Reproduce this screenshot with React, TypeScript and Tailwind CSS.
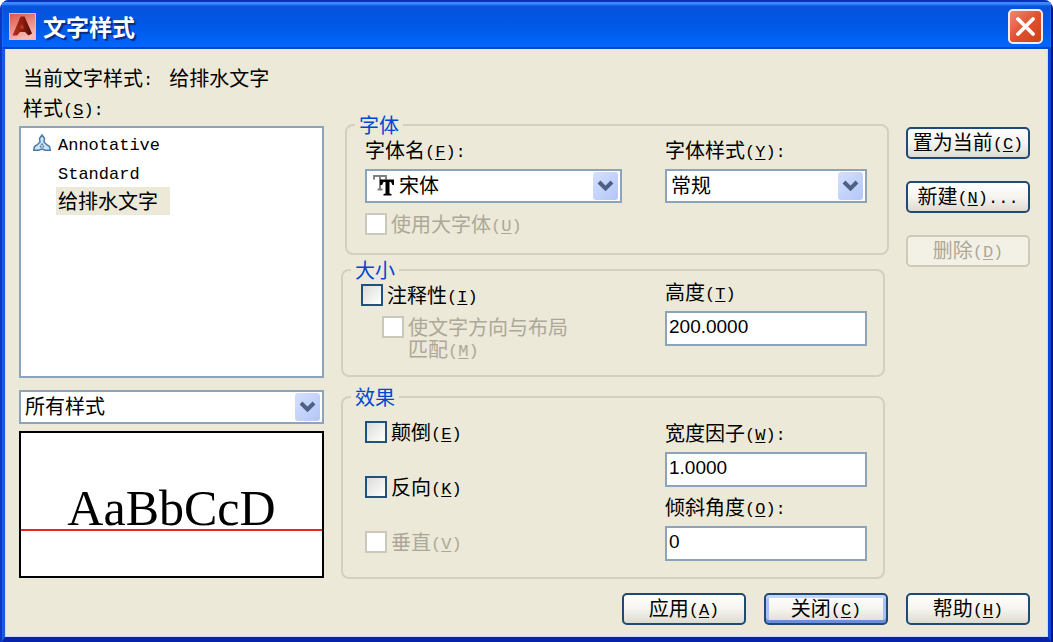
import { useState } from "react";
import type { ReactNode } from "react";
import clsx from "clsx";

const STYLES = ["Annotative", "Standard", "给排水文字"];

const Mono = ({ children }: { children: ReactNode }) => (
  <span className="align-middle font-['Liberation_Mono','Noto_Sans_CJK_SC',monospace] text-[17px] leading-[14px]">
    {children}
  </span>
);

// Label text followed by its keyboard mnemonic, e.g. 高度(T)
const Caption = ({ text, hotkey, after = "" }: { text: string; hotkey: string; after?: string }) => (
  <span>
    {text}
    <Mono>
      (<u className="underline-offset-2">{hotkey}</u>){after}
    </Mono>
  </span>
);

const Chevron = () => (
  <span className="pointer-events-none absolute inset-y-px right-0.5 flex w-[25px] items-center justify-center rounded-[3px] bg-linear-to-br from-[#d5e0fe] to-[#b3c6f8]">
    <svg width="17" height="12" viewBox="0 0 17 12" fill="none" aria-hidden="true">
      <path d="m2 2 6.5 6.5L15 2" stroke="#4d6185" strokeWidth="4" />
    </svg>
  </span>
);

interface DropdownProps {
  id?: string;
  label?: string;
  options: string[];
  icon?: ReactNode;
}

const Dropdown = ({ id, label, options, icon }: DropdownProps) => (
  <div className="relative flex h-[34px] items-center border-2 border-[#8ba3bb] bg-white">
    {icon && <span className="pl-1.5">{icon}</span>}
    <select
      id={id}
      aria-label={label}
      className="h-full min-w-0 flex-1 appearance-none bg-transparent pr-8 pb-0.5 pl-1 leading-[24px] outline-none"
    >
      {options.map((option) => (
        <option key={option}>{option}</option>
      ))}
    </select>
    <Chevron />
  </div>
);

interface CheckProps {
  text: string;
  hotkey: string;
  disabled?: boolean;
  className?: string;
}

const Check = ({ text, hotkey, disabled, className }: CheckProps) => (
  <label className={clsx("flex items-start gap-1", disabled && "text-[#aca899]", className)}>
    <input
      type="checkbox"
      disabled={disabled}
      className="size-[22px] shrink-0 appearance-none border-2 border-[#1d5281] bg-linear-to-br from-[#dcdcd7] to-white checked:bg-[#21a121] disabled:border-[#cac8bb] disabled:from-white"
    />
    <Caption text={text} hotkey={hotkey} />
  </label>
);

interface TextFieldProps {
  id: string;
  text: string;
  hotkey: string;
  after?: string;
  value: string;
}

const TextField = ({ id, text, hotkey, after, value }: TextFieldProps) => (
  <div className="flex flex-col gap-[7px]">
    <label htmlFor={id} className="leading-[24px]">
      <Caption text={text} hotkey={hotkey} after={after} />
    </label>
    <input
      id={id}
      type="text"
      defaultValue={value}
      className="h-[35px] w-full border-2 border-[#8ba3bb] bg-white px-0.5 pb-1 font-['Liberation_Sans',sans-serif] text-[19px] outline-none"
    />
  </div>
);

interface GroupProps {
  title: string;
  className?: string;
  bodyClassName: string;
  children: ReactNode;
}

const Group = ({ title, className, bodyClassName, children }: GroupProps) => (
  <fieldset className={clsx("min-w-0 rounded-lg border-2 border-[#d3d0bf]", className)}>
    <legend className="ml-2 px-1 leading-[20px] text-[#0046d5]">{title}</legend>
    <div className={clsx("flex gap-[43px]", bodyClassName)}>{children}</div>
  </fieldset>
);

interface PushButtonProps {
  text: string;
  hotkey: string;
  after?: string;
  disabled?: boolean;
  focused?: boolean;
}

const PushButton = ({ text, hotkey, after, disabled, focused }: PushButtonProps) => (
  <button
    type="button"
    disabled={disabled}
    className={clsx(
      "h-8 w-[124px] shrink-0 rounded-[5px] border-2 pb-0.5 leading-[24px] whitespace-nowrap",
      disabled
        ? "border-[#cdcab9] bg-[#f3f1e6] text-[#aca899]"
        : "border-[#1f4a75] bg-linear-to-b from-white via-[#f5f4ef] to-[#dedbd0]",
      focused && "shadow-[inset_0_3px_0_#c4d6fb,inset_0_-3px_0_#6c8fdc,inset_3px_0_0_#a9c2f3,inset_-3px_0_0_#a9c2f3]"
    )}
  >
    <Caption text={text} hotkey={hotkey} after={after} />
  </button>
);

const AppIcon = () => (
  <svg width="27" height="27" viewBox="0 0 27 27" aria-hidden="true">
    <defs>
      <linearGradient id="tile" x1="0" y1="0" x2="0.4" y2="1">
        <stop offset="0" stopColor="#d8544e" />
        <stop offset="1" stopColor="#f7b9b2" />
      </linearGradient>
      <linearGradient id="peak" x1="0" y1="0" x2="1" y2="0">
        <stop offset="0" stopColor="#b5301c" />
        <stop offset="0.5" stopColor="#8f1c0e" />
        <stop offset="1" stopColor="#4f0a06" />
      </linearGradient>
    </defs>
    <rect x="0.5" y="0.5" width="26" height="26" fill="url(#tile)" stroke="#f0b3b4" />
    <path d="M3.5 22.5 11.5 3.5h4l7.5 17-3.5 2-3.5-3.5H11l-3 3.5Z" fill="url(#peak)" />
    <path d="m13 11 2 4.500h-4Z" fill="#b8402c" />
  </svg>
);

const AnnotativeIcon = () => (
  <svg width="18" height="18" viewBox="0 0 18 18" fill="#cfe4f5" stroke="#4c7ba8" strokeWidth="1.5" aria-hidden="true">
    <path d="M9 1 11.5 4.5 11 8l3 3 2.5 1.5.8 3.7h-5L9 15l-3.3 1.2h-5l.8-3.7L4 11l3-3-.5-3.5Z" />
    <path d="m9 9.5-2 3.5h4Z" fill="#fff" strokeWidth="1" />
  </svg>
);

const TrueTypeIcon = () => (
  <svg width="22" height="22" viewBox="0 0 22 22" aria-hidden="true">
    <path d="M1 4.5V1h12v3.500M7 1v13M4.500 14.500h5" fill="none" stroke="#808080" strokeWidth="2" />
    <path d="M7 4.500h14V10h-1.500L18 7h-1.500v11.500l2 .5v1.500h-8V19l2-.5V7h-2L9 10H7Z" fill="#000" />
  </svg>
);

export default function App() {
  const [selected, setSelected] = useState("给排水文字");

  return (
    <main className="flex min-h-screen flex-col overflow-hidden rounded-t-[9px] bg-linear-to-r from-[#0a38c4] to-[#00158c] px-0.5 font-['Noto_Sans_CJK_SC',sans-serif] text-[20px] leading-[22px] text-black">
      <header className="flex h-[49px] shrink-0 items-center gap-[7px] bg-linear-to-b from-[#0a50d8] via-[#0058e6] to-[#0366ff] pt-1 pr-2 pl-[7px] shadow-[inset_0_2px_0_#0831b8,inset_0_5px_2px_#3c8cff,inset_0_-2px_0_#0148c8]">
        <AppIcon />
        <h1 className="flex-1 pb-0.5 text-[23px] font-bold text-white [text-shadow:2px_2px_1px_#0a2a80]">文字样式</h1>
        <button
          type="button"
          aria-label="关闭"
          className="flex size-[35px] items-center justify-center rounded-[5px] border-2 border-[#f4eef4] bg-linear-to-br from-[#ec8a70] via-[#e0512c] to-[#cc421a]"
        >
          <svg width="21" height="21" viewBox="0 0 21 21" aria-hidden="true">
            <path d="m3 3 15 15m0-15L3 18" stroke="#fff" strokeWidth="3.8" strokeLinecap="round" />
          </svg>
        </button>
      </header>

      <div className="flex flex-1 flex-col border-x-[3px] border-b-[5px] border-r-[#0a44d8] border-b-[#0522a8] border-l-[#1a5ce0] bg-[#ece9d8] pt-3.5 pr-[18px] pb-3 pl-3.5 shadow-[inset_1px_0_0_#c9dcf5,inset_-1px_-1px_0_#c9dcf5]">
        <p className="flex gap-4 pl-1 leading-[30px]">
          <span>
            当前文字样式<Mono>:</Mono>
          </span>
          <span>{selected}</span>
        </p>

        <div className="flex">
          <section className="flex w-[305px] shrink-0 flex-col">
            <h2 id="styles" className="pl-1 leading-[30px]">
              <Caption text="样式" hotkey="S" after=":" />
            </h2>
            <ul
              role="listbox"
              aria-labelledby="styles"
              className="mt-[3px] h-[252px] border-2 border-[#8ba3bb] bg-white"
            >
              {STYLES.map((name) => (
                <li
                  key={name}
                  role="option"
                  aria-selected={name === selected}
                  onClick={() => setSelected(name)}
                  className="flex h-[29px] items-center pl-3"
                >
                  <span className="w-[23px]">{name === "Annotative" && <AnnotativeIcon />}</span>
                  <span className={clsx("pr-3 pl-0.5 leading-[28px]", name === selected && "bg-[#ece9d8]")}>
                    {/^[A-Z]/.test(name) ? <Mono>{name}</Mono> : name}
                  </span>
                </li>
              ))}
            </ul>
            <div className="mt-3">
              <Dropdown label="样式过滤" options={["所有样式", "正在使用的样式"]} />
            </div>
            <div className="mt-[7px] h-[147px] border-2 border-black bg-white">
              <p className="h-[98px] border-b-2 border-[#e8281e] pt-[45px] text-center font-['Liberation_Serif',serif] text-[50px] leading-[60px]">
                AaBbCcD
              </p>
            </div>
          </section>

          <section className="ml-[17px] min-w-0 flex-1 pt-[22px]">
            <Group title="字体" className="ml-1" bodyClassName="pr-5 pb-[18px] pl-[18px]">
              <div className="min-w-0 flex-1">
                <label htmlFor="font-name" className="mb-1 block leading-[30px]">
                  <Caption text="字体名" hotkey="F" after=":" />
                </label>
                <Dropdown id="font-name" options={["宋体", "黑体", "楷体"]} icon={<TrueTypeIcon />} />
                <Check text="使用大字体" hotkey="U" disabled className="mt-2.5" />
              </div>
              <div className="w-[202px] shrink-0">
                <label htmlFor="font-style" className="mb-1 block leading-[30px]">
                  <Caption text="字体样式" hotkey="Y" after=":" />
                </label>
                <Dropdown id="font-style" options={["常规"]} />
              </div>
            </Group>

            <Group title="大小" className="mt-[5px] mr-1" bodyClassName="pr-4 pb-[15px] pl-[18px]">
              <div className="min-w-0 flex-1 pt-1">
                <Check text="注释性" hotkey="I" />
                <Check
                  text="使文字方向与布局匹配"
                  hotkey="M"
                  disabled
                  className="mt-2.5 ml-[21px] w-[190px]"
                />
              </div>
              <div className="w-[202px] shrink-0">
                <TextField id="height" text="高度" hotkey="T" value="200.0000" />
              </div>
            </Group>

            <Group title="效果" className="mt-2.5 mr-1" bodyClassName="pr-4 pb-4 pl-[22px]">
              <div className="flex min-w-0 flex-1 flex-col gap-[33px] pt-3.5">
                <Check text="颠倒" hotkey="E" />
                <Check text="反向" hotkey="K" />
                <Check text="垂直" hotkey="V" disabled />
              </div>
              <div className="flex w-[202px] shrink-0 flex-col gap-2 pt-3.5">
                <TextField id="width-factor" text="宽度因子" hotkey="W" after=":" value="1.0000" />
                <TextField id="oblique" text="倾斜角度" hotkey="O" after=":" value="0" />
              </div>
            </Group>
          </section>

          <aside className="ml-[17px] flex flex-col gap-[22px] pt-[34px]">
            <PushButton text="置为当前" hotkey="C" />
            <PushButton text="新建" hotkey="N" after="..." />
            <PushButton text="删除" hotkey="D" disabled />
          </aside>
        </div>

        <footer className="mt-auto flex justify-end gap-[18px] pt-3">
          <PushButton text="应用" hotkey="A" />
          <PushButton text="关闭" hotkey="C" focused />
          <PushButton text="帮助" hotkey="H" />
        </footer>
      </div>
    </main>
  );
}
